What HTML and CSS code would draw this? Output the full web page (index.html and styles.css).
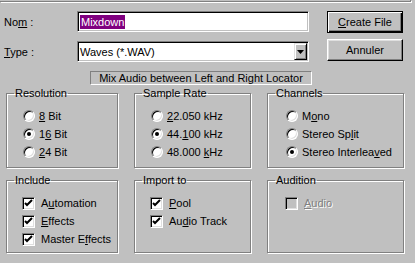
FILE: index.html
```html
<!DOCTYPE html>
<html lang="fr">
<head>
    <meta charset="UTF-8">
    <title>Mixdown</title>
    <link rel="stylesheet" href="styles.css">
</head>
<body>
    <div class="edge"></div>

    <!-- File name / type -->
    <div class="top">
        <div class="fields">
            <div class="row">
                <label class="lbl">No<u>m</u> :</label>
                <div class="input"><span class="sel">Mixdown</span></div>
            </div>
            <div class="row">
                <label class="lbl"><u>T</u>ype :</label>
                <div class="input combo">
                    <span>Waves (*.WAV)</span>
                    <span class="drop"><svg width="7" height="4" viewBox="0 0 7 4"><path d="M0 0h7L3.5 4z" fill="#000"/></svg></span>
                </div>
            </div>
            <div class="mixbox">Mix Audio between Left and Right Locator</div>
        </div>
        <div class="buttons">
            <button class="btn default"><u>C</u>reate File</button>
            <button class="btn">Annuler</button>
        </div>
    </div>

    <!-- Options -->
    <div class="groups">
        <fieldset class="group">
            <legend>Resolution</legend>
            <ul class="opts">
                <li class="opt"><span class="radio"></span><span><u>8</u> Bit</span></li>
                <li class="opt"><span class="radio on"></span><span>1<u>6</u> Bit</span></li>
                <li class="opt"><span class="radio"></span><span><u>2</u>4 Bit</span></li>
            </ul>
        </fieldset>
        <fieldset class="group">
            <legend>Sample Rate</legend>
            <ul class="opts">
                <li class="opt"><span class="radio"></span><span><u>2</u>2.050 kHz</span></li>
                <li class="opt"><span class="radio on"></span><span>44.<u>1</u>00 kHz</span></li>
                <li class="opt"><span class="radio"></span><span>48.000 <u>k</u>Hz</span></li>
            </ul>
        </fieldset>
        <fieldset class="group">
            <legend>Channels</legend>
            <ul class="opts wide">
                <li class="opt"><span class="radio"></span><span>M<u>o</u>no</span></li>
                <li class="opt"><span class="radio"></span><span>Stereo Sp<u>l</u>it</span></li>
                <li class="opt"><span class="radio on"></span><span>Stereo Interlea<u>v</u>ed</span></li>
            </ul>
        </fieldset>

        <fieldset class="group low">
            <legend>Include</legend>
            <ul class="opts">
                <li class="opt"><span class="check"><svg width="9" height="9" viewBox="0 0 9 9"><path d="M1 4l2 2 5-5" fill="none" stroke="#000" stroke-width="2"/></svg></span><span>A<u>u</u>tomation</span></li>
                <li class="opt"><span class="check"><svg width="9" height="9" viewBox="0 0 9 9"><path d="M1 4l2 2 5-5" fill="none" stroke="#000" stroke-width="2"/></svg></span><span><u>E</u>ffects</span></li>
                <li class="opt"><span class="check"><svg width="9" height="9" viewBox="0 0 9 9"><path d="M1 4l2 2 5-5" fill="none" stroke="#000" stroke-width="2"/></svg></span><span>Master E<u>f</u>fects</span></li>
            </ul>
        </fieldset>
        <fieldset class="group low">
            <legend>Import to</legend>
            <ul class="opts">
                <li class="opt"><span class="check"><svg width="9" height="9" viewBox="0 0 9 9"><path d="M1 4l2 2 5-5" fill="none" stroke="#000" stroke-width="2"/></svg></span><span><u>P</u>ool</span></li>
                <li class="opt"><span class="check"><svg width="9" height="9" viewBox="0 0 9 9"><path d="M1 4l2 2 5-5" fill="none" stroke="#000" stroke-width="2"/></svg></span><span>Au<u>d</u>io Track</span></li>
            </ul>
        </fieldset>
        <fieldset class="group low">
            <legend>Audition</legend>
            <ul class="opts wide">
                <li class="opt disabled"><span class="check off"></span><span><u>A</u>udio</span></li>
            </ul>
        </fieldset>
    </div>
</body>
</html>
```

FILE: styles.css
```css
body {
    margin: 0;
    width: 415px;
    height: 263px;
    overflow: hidden;
    background: #c0c0c0;
    color: #000;
    font: 11px "Liberation Sans", Arial, sans-serif;
}

/* bottom edge of the panel above */
.edge {
    width: 410px;
    height: 1px;
    border-right: 1px solid #808080;
    border-bottom: 1px solid #808080;
    box-shadow: 1px 1px 0 #fff;
}

/* Top section */
.top {
    display: flex;
    padding: 9px 0 0 4px;
}

.fields {
    width: 308px;
}

.row {
    display: flex;
    align-items: center;
    height: 21px;
}

.row + .row {
    margin-top: 9px;
}

.lbl {
    width: 73px;
}

.input {
    box-sizing: border-box;
    width: 232px;
    height: 21px;
    display: flex;
    align-items: center;
    padding: 0 1px 0 2px;
    background: #fff;
    border: 1px solid;
    border-color: #808080 #fff #fff #808080;
    box-shadow: inset 1px 1px #000, inset -1px -1px #c0c0c0;
}

.sel {
    background: #800080;
    color: #fff;
    padding: 1px 1px;
}

.combo {
    justify-content: space-between;
}

.drop {
    box-sizing: border-box;
    width: 13px;
    height: 17px;
    display: flex;
    align-items: center;
    justify-content: center;
    background: #c0c0c0;
    border: 1px solid;
    border-color: #dfdfdf #000 #000 #dfdfdf;
    box-shadow: inset 1px 1px #fff, inset -1px -1px #808080;
}

.mixbox {
    box-sizing: border-box;
    width: 222px;
    height: 14px;
    margin: 9px 0 0 86px;
    border: 1px solid;
    border-color: #808080 #fff #fff #808080;
    line-height: 12px;
    text-align: center;
}

/* Buttons */
.buttons {
    display: flex;
    flex-direction: column;
    gap: 6px;
    margin-left: 15px;
}

.btn {
    box-sizing: border-box;
    width: 76px;
    height: 22px;
    padding: 0;
    font: inherit;
    color: #000;
    background: #c0c0c0;
    border: 1px solid;
    border-color: #fff #000 #000 #fff;
    box-shadow: inset -1px -1px #808080, inset 1px 1px #dfdfdf;
}

.btn.default {
    border-color: #000;
    box-shadow: inset 1px 1px #fff, inset -1px -1px #000, inset -2px -2px #808080;
}

/* Group boxes */
.groups {
    display: grid;
    grid-template-columns: 112px 117px 137px;
    column-gap: 16px;
    row-gap: 6px;
    padding: 2px 0 0 6px;
}

.group {
    min-width: 0;
    margin: 0;
    padding: 7px 0 6px 7px;
    border: 1px solid #808080;
    box-shadow: inset 1px 1px #fff, 1px 1px #fff;
}

.group.low {
    padding-bottom: 4px;
}

.group legend {
    padding: 0 1px;
    line-height: 13px;
}

.opts {
    list-style: none;
    margin: 0;
    padding: 0 0 0 9px;
}

.opts.wide {
    padding-left: 11px;
}

.opt {
    display: flex;
    align-items: center;
    height: 18px;
}

.radio {
    box-sizing: border-box;
    flex: none;
    width: 12px;
    height: 12px;
    margin-right: 4px;
    display: flex;
    align-items: center;
    justify-content: center;
    border-radius: 50%;
    background: #fff;
    border: 1px solid;
    border-color: #808080 #fff #fff #808080;
    box-shadow: inset 1px 1px #000, inset -1px -1px #dfdfdf;
}

.radio.on::after {
    content: "";
    width: 4px;
    height: 4px;
    border-radius: 50%;
    background: #000;
}

.check {
    box-sizing: border-box;
    flex: none;
    width: 13px;
    height: 13px;
    margin: 0 6px 0 -1px;
    display: flex;
    align-items: center;
    justify-content: center;
    background: #fff;
    border: 1px solid;
    border-color: #808080 #fff #fff #808080;
    box-shadow: inset 1px 1px #000, inset -1px -1px #dfdfdf;
}

.check.off {
    background: #c0c0c0;
}

.disabled {
    color: #808080;
    text-shadow: 1px 1px #fff;
}
```
